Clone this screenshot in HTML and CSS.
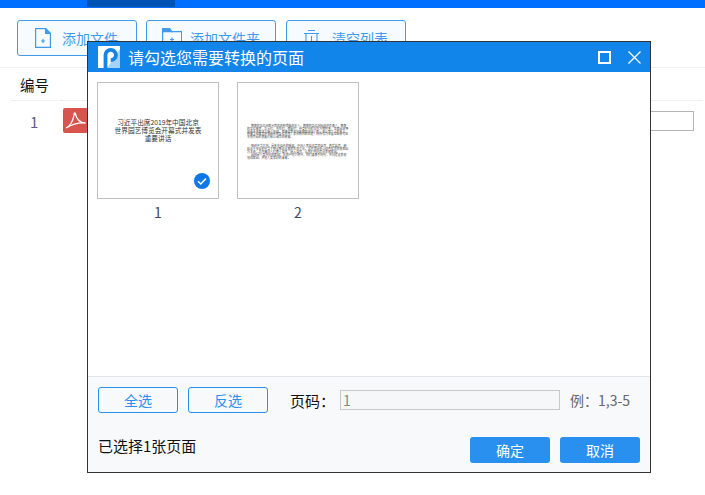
FILE: index.html
```html
<!DOCTYPE html>
<html lang="zh-CN">
<head>
<meta charset="utf-8">
<title>请勾选您需要转换的页面</title>
<link rel="stylesheet" href="styles.css">
</head>
<body>
<div class="topbar"><div class="topbar-active"></div></div>
<div class="toolbar">
  <button class="tool tool-file">
    <svg class="tool-icon" width="16" height="20" viewBox="0 0 16 20" fill="none" stroke="#3f9bf0" stroke-width="1.200"><path d="M.6.6h10l4.800 4.800v14H.6z"/><path d="M10.600.6v4.800h4.800z" fill="#3f9bf0"/><path d="M6 13h4M8 11v4"/></svg>
    <span>添加文件</span>
  </button>
  <button class="tool tool-folder">
    <svg class="tool-icon" width="20" height="22" viewBox="0 0 20 22" fill="none" stroke="#3f9bf0" stroke-width="1.200"><path d="M.6 1.600h7l2 3h10v15H.6z"/><path d="M.6 1.600h7l2 3H.6z" fill="#3f9bf0"/><path d="M8 12.500h4M10 10.500v4"/></svg>
    <span>添加文件夹</span>
  </button>
  <button class="tool tool-clear">
    <svg class="tool-icon" width="15" height="22" viewBox="0 0 15 22" fill="none" stroke="#3f9bf0" stroke-width="1.100"><path d="M0 6.500h15M4 3.500h7M2 6.500v14h11v-14M7.500 9v8"/></svg>
    <span>清空列表</span>
  </button>
</div>
<div class="table-head">
  <div class="col-no">编号</div>
  <div class="col-rest"></div>
</div>
<div class="table-row">
  <div class="row-no">1</div>
  <div class="pdf-icon">
    <svg width="24" height="25" viewBox="0 0 24 25" fill="none" stroke="#fff" stroke-width="1.300"><path d="M3 20c4-2 7-7 8-13 .3-2 1-3 1.500-1 .6 4 4 9 10 9-5-.5-12 .5-19.500 5z"/></svg>
  </div>
  <div class="row-input"></div>
</div>

<section class="dialog">
  <header class="dlg-title">
    <div class="logo">
      <svg width="22" height="22" viewBox="0 0 22 22"><rect width="22" height="22" fill="#fff"/><path d="M22 3V22H9z" fill="#a5d2f8"/><path d="M7.500 22V9a5.200 5.200 0 1 1 5.200 5.200" fill="none" stroke="#1285ea" stroke-width="3.800"/></svg>
    </div>
    <h1>请勾选您需要转换的页面</h1>
    <div class="win-btns">
      <svg width="13" height="13" viewBox="0 0 13 13" fill="none" stroke="#fff" stroke-width="2"><rect x="1" y="1" width="11" height="11"/></svg>
      <svg width="13" height="13" viewBox="0 0 13 13" fill="none" stroke="#fff" stroke-width="1.300"><path d="M.5.5l12 12M12.500.5l-12 12"/></svg>
    </div>
  </header>
  <div class="pages">
    <figure class="page">
      <div class="thumb thumb-title">
        <p>习近平出席2019年中国北京<br>世界园艺博览会开幕式并发表<br>重要讲话</p>
        <svg class="check" width="16" height="16" viewBox="0 0 16 16"><circle cx="8" cy="8" r="8" fill="#0f78e6"/><path d="M4 8.300l2.800 2.700L12 5.500" fill="none" stroke="#fff" stroke-width="1.500"/></svg>
      </div>
      <figcaption>1</figcaption>
    </figure>
    <figure class="page">
      <div class="thumb thumb-body">
        <p>尊敬的各位国家元首和政府首脑和夫人，尊敬的各位国际组织负责人，尊敬的各位来宾，女士们，先生们，朋友们：仲夏时节的北京万物并秀，世界园艺博览会今天在这里隆重开幕。我谨代表中国政府和中国人民，并以我个人的名义，向来华出席北京世园会的各位嘉宾，表示热烈的欢迎！向所有为本届世园会付出辛勤劳动的朋友们致以诚挚的谢意。</p>
        <p>锦绣中华大地，是名花佳卉的摇篮。中国人民自古崇尚自然、热爱自然，绵延五千多年的中华文明孕育着丰富的生态文化。北京世园会以绿色生活美丽家园为主题，旨在倡导人们尊重自然、融入自然，让我们共同建设美丽家园。</p>
        <p>园林是人类共同的家园，生态兴则文明兴，我们要携手同行，共同建设美丽地球家园，开创人类美好的未来。</p>
      </div>
      <figcaption>2</figcaption>
    </figure>
  </div>
  <footer class="dlg-foot">
    <div class="foot-row">
      <button class="btn-outline">全选</button>
      <button class="btn-outline">反选</button>
      <label class="code-label">页码：</label>
      <input class="code-input" value="1" disabled>
      <span class="hint">例：1,3-5</span>
    </div>
    <div class="foot-row foot-bottom">
      <span class="selected">已选择1张页面</span>
      <div class="actions">
        <button class="btn-solid">确定</button>
        <button class="btn-solid">取消</button>
      </div>
    </div>
  </footer>
</section>
</body>
</html>
```
FILE: styles.css
```css
* { box-sizing: border-box; }
html, body { margin: 0; height: 100%; overflow: hidden; }
body {
  width: 705px;
  height: 495px;
  position: relative;
  background: #fff;
  font-family: "Noto Sans CJK SC", "Noto Sans", sans-serif;
  font-size: 14px;
  color: #111;
}
button, input { font-family: inherit; }

.topbar { height: 8px; background: #006fff; padding-left: 87px; }
.topbar-active { width: 88px; height: 7px; background: #0052b4; }

.toolbar {
  height: 60px;
  padding: 12px 0 0 17px;
  display: flex;
  gap: 9px;
  border-bottom: 1px solid #eee;
}
.tool {
  height: 36px;
  display: flex;
  align-items: center;
  padding: 0 0 0 17px;
  border: 1px solid #3f9bf0;
  border-radius: 3px;
  background: #f6fbff;
  color: #3f9bf0;
  font-size: 14px;
}
.tool-file { width: 120px; gap: 11px; }
.tool-folder { width: 130px; gap: 8px; padding-left: 15px; }
.tool-clear { width: 120px; margin-left: 1px; gap: 13px; }
.tool-icon { flex: none; }
.tool span { white-space: nowrap; }

.table-head {
  height: 33px;
  padding: 0 0 0 11px;
  display: flex;
  align-items: center;
  gap: 2px;
}
.col-no {
  width: 46px;
  height: 33px;
  padding: 1px 0 0 9px;
  font-size: 14.500px;
  line-height: 31px;
  border-bottom: 1px solid #eee;
}
.col-rest { width: 644px; height: 33px; border-bottom: 1px solid #eee; }
.table-row { height: 40px; display: flex; align-items: flex-start; position: relative; }
.row-no { width: 63px; padding: 10px 0 0 30px; color: #5d5d8a; font-size: 15px; line-height: 22px; }
.pdf-icon {
  width: 25px;
  height: 25px;
  margin-top: 7px;
  background: #d9534f;
  border-radius: 2px;
}
.pdf-icon svg { display: block; }
.row-input {
  margin: 10px 0 0 562px;
  width: 44px;
  height: 20px;
  border: 1px solid #b5b5b5;
  border-left: 0;
  flex: none;
  position: absolute;
  left: 88px;
}

.dialog {
  position: absolute;
  left: 87px;
  top: 41px;
  width: 564px;
  height: 432px;
  border: 1px solid #333;
  background: #fff;
  display: flex;
  flex-direction: column;
}
.dlg-title {
  height: 30px;
  flex: none;
  background: #1285ea;
  display: flex;
  align-items: center;
  padding: 0 9px 0 10px;
  color: #fff;
}
.logo { width: 22px; height: 22px; flex: none; }
.logo svg { display: block; }
.dlg-title h1 {
  margin: 0 0 0 8px;
  font-size: 16px;
  font-weight: 400;
  line-height: 30px;
  flex: 1;
}
.win-btns { display: flex; gap: 17px; align-items: center; }
.win-btns svg { display: block; }

.pages {
  flex: 1;
  display: flex;
  gap: 18px;
  padding: 10px 0 0 9px;
  align-items: flex-start;
}
.page { margin: 0; width: 122px; }
.page figcaption {
  text-align: center;
  color: #45456a;
  font-size: 14px;
  line-height: 20px;
  margin-top: 3px;
}
.thumb {
  width: 122px;
  height: 117px;
  border: 1px solid #c0c0c0;
  position: relative;
  background: #fff;
}
.thumb-title p {
  margin: 35px 0 0;
  text-align: center;
  font-size: 6.700px;
  line-height: 8px;
  color: #333;
}
.check { position: absolute; right: 8px; bottom: 9px; display: block; }
.thumb-body { padding: 42px 9px 0; }
.thumb-body p {
  margin: 0 0 6px;
  font-size: 2.900px;
  line-height: 2.800px;
  color: #444;
  text-indent: 4px;
}
.thumb-body p:last-child { margin-top: -5px; }

.dlg-foot {
  height: 96px;
  flex: none;
  background: #f8f9fb;
  border-top: 1px solid #e2e3e6;
  padding: 10px 10px 0;
}
.foot-row { display: flex; align-items: center; }
.btn-outline {
  width: 80px;
  height: 26px;
  padding: 0;
  margin-right: 10px;
  border: 1px solid #2a90ef;
  border-radius: 3px;
  background: transparent;
  color: #2a90ef;
  font-size: 14px;
}
.code-label { margin-left: 12px; width: 50px; font-size: 15px; }
.code-input {
  width: 220px;
  height: 20px;
  border: 1px solid #c8c8c8;
  background: #f6f7f9;
  color: #888;
  font-size: 14px;
  padding: 0 2px;
}
.hint { margin-left: 10px; color: #666; font-size: 14px; }
.foot-bottom { justify-content: space-between; margin-top: 24px; }
.selected { font-size: 15px; margin-top: -9px; }
.actions { display: flex; gap: 10px; }
.btn-solid {
  width: 80px;
  height: 26px;
  padding: 0;
  border: 0;
  border-radius: 3px;
  background: #2a90ef;
  color: #fff;
  font-size: 14px;
}
```
